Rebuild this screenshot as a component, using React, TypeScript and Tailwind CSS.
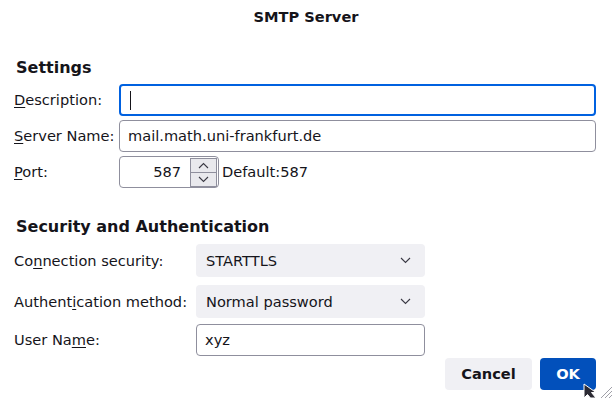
import React from 'react';

const font = { fontFamily: '"DejaVu Sans", Verdana, sans-serif' };

function Chevron({ up = false }: { up?: boolean }) {
  return (
    <svg width="11" height="7" viewBox="0 0 11 7" className="block">
      <path
        d={up ? 'M1 6 L5.5 1.5 L10 6' : 'M1 1 L5.5 5.5 L10 1'}
        fill="none"
        stroke="#3a3944"
        strokeWidth="1.1"
      />
    </svg>
  );
}

function Select({ value }: { value: string }) {
  return (
    <div className="flex h-[33px] w-[229px] items-center justify-between rounded-[4px] bg-[#f0f0f4] pl-[10px] pr-[14px]">
      <span>{value}</span>
      <Chevron />
    </div>
  );
}

export default function App() {
  return (
    <div
      className="relative h-[398px] w-[612px] overflow-hidden bg-white text-[14.6px] text-[#15141a]"
      style={font}
    >
      {/* title */}
      <div className="flex h-[33px] items-center justify-center text-[14.6px] font-bold">SMTP Server</div>

      <div className="flex flex-col pl-[14px] pr-[16px]">
        <h2 className="mt-[22px] pl-[2px] text-[16px] font-bold leading-[26px]">Settings</h2>

        <div className="mt-[3px] grid grid-cols-[105px_1fr] items-center gap-y-[4px]">
          <label>
            <u className="underline-offset-2">D</u>escription:
          </label>
          <div className="flex h-[32px] items-center rounded-[4px] border-2 border-[#0061e0] pl-[9px]">
            <span className="h-[19px] w-[1px] bg-[#15141a]" />
          </div>

          <label>
            <u className="underline-offset-2">S</u>erver Name:
          </label>
          <div className="flex h-[32px] items-center rounded-[4px] border border-[#8f8f9d] pl-[8px]">
            mail.math.uni-frankfurt.de
          </div>

          <label>
            <u className="underline-offset-2">P</u>ort:
          </label>
          <div className="flex items-center gap-[3px]">
            <div className="flex h-[32px] w-[100px] items-center rounded-[4px] border border-[#8f8f9d]">
              <span className="flex-1 pr-[9px] text-right">587</span>
              <div className="mr-[1px] flex h-[29px] w-[27px] flex-col border border-[#8f8f9d] bg-[#e9e9ed]">
                <div className="flex flex-1 items-center justify-center border-b border-[#8f8f9d]">
                  <Chevron up />
                </div>
                <div className="flex flex-1 items-center justify-center">
                  <Chevron />
                </div>
              </div>
            </div>
            <span>Default:587</span>
          </div>
        </div>

        <h2 className="mt-[26px] pl-[2px] text-[16px] font-bold leading-[26px]">Security and Authentication</h2>

        <div className="mt-[4px] grid grid-cols-[182px_229px] items-center">
          <label>
            Co<u className="underline-offset-2">n</u>nection security:
          </label>
          <Select value="STARTTLS" />

          <label className="mt-[8px]">
            Authent<u className="underline-offset-2">i</u>cation method:
          </label>
          <div className="mt-[8px]">
            <Select value="Normal password" />
          </div>

          <label className="mt-[6px]">
            User Na<u className="underline-offset-2">m</u>e:
          </label>
          <div className="mt-[6px] flex h-[32px] items-center rounded-[4px] border border-[#8f8f9d] pl-[8px]">xyz</div>
        </div>

        <div className="mt-[2px] flex justify-end gap-[8px]">
          <button className="h-[32px] w-[87px] rounded-[4px] bg-[#f0f0f4] font-bold">Cancel</button>
          <button className="h-[32px] w-[56px] rounded-[4px] bg-[#0250bb] font-bold text-white">OK</button>
        </div>
      </div>

      {/* mouse pointer */}
      <svg className="absolute left-[583px] top-[383px]" width="16" height="16" viewBox="0 0 16 16">
        <path d="M1 1 L1 15 L4.5 11.5 L7.5 15 L13 15 L8.5 9.5 L13 9.5 Z" fill="#2b2a33" stroke="#ffffff" strokeWidth="1" />
      </svg>

      {/* resize grip */}
      <svg className="absolute right-0 bottom-0" width="12" height="12" viewBox="0 0 12 12">
        <path d="M12 1 L1 12 M12 5 L5 12 M12 9 L9 12" stroke="#a0a0a8" strokeWidth="1" />
      </svg>
    </div>
  );
}
